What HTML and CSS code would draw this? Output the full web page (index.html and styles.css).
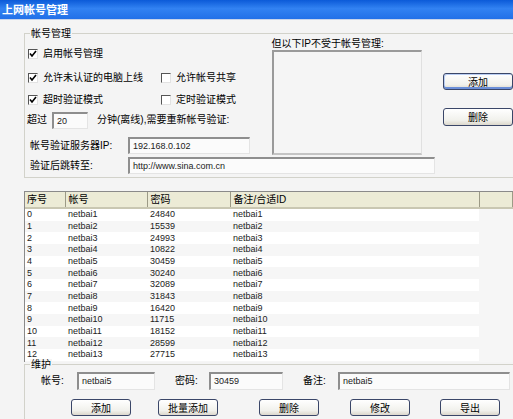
FILE: index.html
```html
<!DOCTYPE html>
<html lang="zh-CN">
<head>
  <meta charset="UTF-8">
  <title>上网帐号管理</title>
  <link rel="stylesheet" href="styles.css">
</head>
<body>
  <div class="titlebar">上网帐号管理</div>

  <div class="client">
    <!-- 帐号管理 -->
    <div class="group account">
      <span class="group-title">帐号管理</span>
      <div class="account-top">
        <div class="opts">
          <div class="check row1"><span class="box on"><svg viewBox="0 0 10 10"><polyline points="2,4.5 4,7 8,2" /></svg></span>启用帐号管理</div>
          <div class="check-line row2">
            <div class="check"><span class="box on"><svg viewBox="0 0 10 10"><polyline points="2,4.5 4,7 8,2" /></svg></span>允许未认证的电脑上线</div>
            <div class="check col2"><span class="box"></span>允许帐号共享</div>
          </div>
          <div class="check-line row3">
            <div class="check"><span class="box on"><svg viewBox="0 0 10 10"><polyline points="2,4.5 4,7 8,2" /></svg></span>超时验证模式</div>
            <div class="check col2"><span class="box"></span>定时验证模式</div>
          </div>
          <div class="field timeout">
            <span>超过</span>
            <span class="input minutes">20</span>
            <span class="after">分钟(离线),需要重新帐号验证:</span>
          </div>
          <div class="field server">
            <span class="label">帐号验证服务器IP:</span>
            <span class="input ip">192.168.0.102</span>
          </div>
        </div>

        <div class="exempt">
          <div class="exempt-label">但以下IP不受于帐号管理:</div>
          <div class="listbox"></div>
        </div>

        <div class="side-buttons">
          <button class="btn add focus">添加</button>
          <button class="btn remove">删除</button>
        </div>
      </div>
      <div class="field redirect">
        <span class="label">验证后跳转至:</span>
        <span class="input url">http://www.sina.com.cn</span>
      </div>
    </div>

    <!-- 帐号列表 -->
    <div class="list">
      <table>
        <thead>
          <tr><th class="c1">序号</th><th class="c2">帐号</th><th class="c3">密码</th><th class="c4">备注/合适ID</th><th class="c5"></th></tr>
        </thead>
        <tbody>
          <tr><td>0</td><td>netbai1</td><td>24840</td><td>netbai1</td><td></td></tr>
          <tr><td>1</td><td>netbai2</td><td>15539</td><td>netbai2</td><td></td></tr>
          <tr><td>2</td><td>netbai3</td><td>24993</td><td>netbai3</td><td></td></tr>
          <tr><td>3</td><td>netbai4</td><td>10822</td><td>netbai4</td><td></td></tr>
          <tr><td>4</td><td>netbai5</td><td>30459</td><td>netbai5</td><td></td></tr>
          <tr><td>5</td><td>netbai6</td><td>30240</td><td>netbai6</td><td></td></tr>
          <tr><td>6</td><td>netbai7</td><td>32089</td><td>netbai7</td><td></td></tr>
          <tr><td>7</td><td>netbai8</td><td>31843</td><td>netbai8</td><td></td></tr>
          <tr><td>8</td><td>netbai9</td><td>16420</td><td>netbai9</td><td></td></tr>
          <tr><td>9</td><td>netbai10</td><td>11715</td><td>netbai10</td><td></td></tr>
          <tr><td>10</td><td>netbai11</td><td>18152</td><td>netbai11</td><td></td></tr>
          <tr><td>11</td><td>netbai12</td><td>28599</td><td>netbai12</td><td></td></tr>
          <tr><td>12</td><td>netbai13</td><td>27715</td><td>netbai13</td><td></td></tr>
        </tbody>
      </table>
    </div>

    <!-- 维护 -->
    <div class="group maintain">
      <span class="group-title">维护</span>
      <div class="edit-row">
        <span class="label l-user">帐号:</span>
        <span class="input i-user">netbai5</span>
        <span class="label l-pass">密码:</span>
        <span class="input i-pass">30459</span>
        <span class="label l-note">备注:</span>
        <span class="input i-note">netbai5</span>
      </div>
      <div class="button-row">
        <button class="btn b-add">添加</button>
        <button class="btn b-batch">批量添加</button>
        <button class="btn b-del">删除</button>
        <button class="btn b-edit">修改</button>
        <button class="btn b-export">导出</button>
      </div>
    </div>
  </div>
</body>
</html>
```

FILE: styles.css
```css
body {
  margin: 0;
  width: 513px;
  height: 419px;
  overflow: hidden;
  background-color: #f4f4f4;
  font-family: "Liberation Sans", "Noto Sans CJK SC", sans-serif;
  font-size: 10px;
  line-height: 12px;
  color: #000;
}
.titlebar {
  height: 19px;
  padding-left: 2px;
  background: linear-gradient(#0b5ad8, #3282f2 45%, #2270e8);
  border-bottom: 1px solid #c8d4ea;
  color: #fff;
  font-family: "Noto Sans CJK SC", sans-serif;
  font-size: 11px;
  font-weight: bold;
  line-height: 19px;
}
.client {
  padding-left: 24px;
}

/* group boxes */
.group {
  position: relative;
  border: 1px solid #d2d2ca;
  border-right: none;
}
.group-title {
  position: absolute;
  top: -6px;
  left: 5px;
  padding: 0 1px;
  background-color: #f4f4f4;
  line-height: 12px;
}
.account {
  margin-top: 13px;
  padding-bottom: 3px;
}
.account-top {
  display: flex;
  height: 121px;
}
.opts {
  width: 254px;
  padding-top: 13px;
}

/* check boxes */
.check {
  display: flex;
  align-items: center;
  height: 14px;
  padding-left: 3px;
}
.check-line {
  display: flex;
}
.check-line .check {
  width: 133px;
}
.check-line .col2 {
  width: auto;
  padding-left: 0;
}
.row2 { margin-top: 10px; }
.row3 { margin-top: 8px; }
.box {
  width: 10px;
  height: 10px;
  margin-right: 5px;
  border-top: 1px solid #555;
  border-left: 1px solid #555;
  border-right: 1px solid #e2e2e2;
  border-bottom: 1px solid #e2e2e2;
  background-color: #fff;
  box-sizing: border-box;
}
.box svg {
  display: block;
  width: 10px;
  height: 10px;
  margin: -1px 0 0 -1px;
}
.box polyline {
  fill: none;
  stroke: #000;
  stroke-width: 1.6;
}

/* text fields */
.field {
  display: flex;
  align-items: center;
}
.input {
  box-sizing: border-box;
  height: 17px;
  padding-left: 3px;
  background-color: #fbfbfb;
  border-top: 2px solid #8e8e8e;
  border-left: 2px solid #8e8e8e;
  border-right: 1px solid #e4e4e4;
  border-bottom: 1px solid #e4e4e4;
  font-size: 9px;
  line-height: 14px;
  color: #222;
}
.timeout {
  margin-top: 5px;
  padding-left: 2px;
  height: 16px;
}
.minutes {
  width: 36px;
  margin-left: 5px;
}
.after {
  margin-left: 9px;
}
.server {
  margin-top: 9px;
}
.field .label {
  width: 98px;
  padding-left: 5px;
}
.ip {
  width: 122px;
}
.redirect {
  margin-top: 2px;
}
.url {
  width: 307px;
}

/* exempt ip list */
.exempt {
  width: 155px;
  padding-top: 4px;
}
.exempt-label {
  height: 12px;
}
.listbox {
  box-sizing: border-box;
  height: 105px;
  margin-top: 0;
  border-top: 2px solid #9a9a9a;
  border-left: 2px solid #9a9a9a;
  border-right: 1px solid #e0e0e0;
  border-bottom: 2px solid #c4c4c4;
  background-color: #f5f5f5;
}
.side-buttons {
  display: flex;
  flex-direction: column;
  margin-left: 21px;
}

/* buttons */
.btn {
  box-sizing: border-box;
  height: 17px;
  padding: 0;
  border: 1px solid #3a4668;
  border-radius: 3px;
  background: linear-gradient(#fff, #f1f1ec 70%, #dcd8cc);
  font-family: "Noto Sans CJK SC", sans-serif;
  font-size: 10px;
  line-height: 14px;
  color: #000;
}
.side-buttons .btn {
  width: 70px;
}
.add {
  margin-top: 39px;
}
.remove {
  margin-top: 18px;
  height: 18px;
}
.focus {
  box-shadow: inset 0 -2px 0 #6b8fd8, inset 1px 1px 0 #b9cdf2;
}

/* account list */
.list {
  margin-top: 13px;
  height: 170px;
  overflow: hidden;
  border-top: 1px solid #8a8a8a;
  border-left: 1px solid #8a8a8a;
  background-color: #f6f6f6;
}
.list table {
  border-collapse: collapse;
  table-layout: fixed;
  width: 488px;
}
.list th {
  height: 16px;
  padding: 0 0 0 3px;
  box-sizing: border-box;
  background-color: #ecebd6;
  border-right: 1px solid #9c9a86;
  border-bottom: 2px solid #c9c7b2;
  font-weight: normal;
  text-align: left;
  line-height: 13px;
}
.list th.c1 { padding-left: 2px; }
.c1 { width: 40px; }
.c2 { width: 82px; }
.c3 { width: 83px; }
.c4 { width: 249px; }
.list td {
  height: 11.67px;
  padding: 0 0 0 3px;
  font-size: 9px;
  line-height: 11px;
  color: #222;
  white-space: nowrap;
}
.list td:first-child {
  padding-left: 2px;
}
.list tbody tr:nth-child(odd) td {
  background-color: #fff;
}
.list tbody tr td:last-child {
  background-color: #f6f6f6;
}

/* maintenance */
.maintain {
  margin-top: 2px;
  height: 60px;
}
.edit-row {
  display: flex;
  align-items: center;
  margin-top: 7px;
}
.edit-row .input {
  height: 18px;
  line-height: 15px;
}
.edit-row .label {
  padding: 0;
}
.l-user { margin-left: 16px; width: 36px; }
.i-user { width: 78px; }
.l-pass { margin-left: 20px; width: 34px; }
.i-pass { width: 74px; }
.l-note { margin-left: 20px; width: 35px; }
.i-note { width: 172px; }
.button-row {
  display: flex;
  margin-top: 9px;
}
.button-row .btn {
  width: 60px;
}
.b-add { margin-left: 46px; }
.b-batch { margin-left: 27px; }
.b-del { margin-left: 41px; }
.b-edit { margin-left: 31px; }
.b-export { margin-left: 30px; }
```
